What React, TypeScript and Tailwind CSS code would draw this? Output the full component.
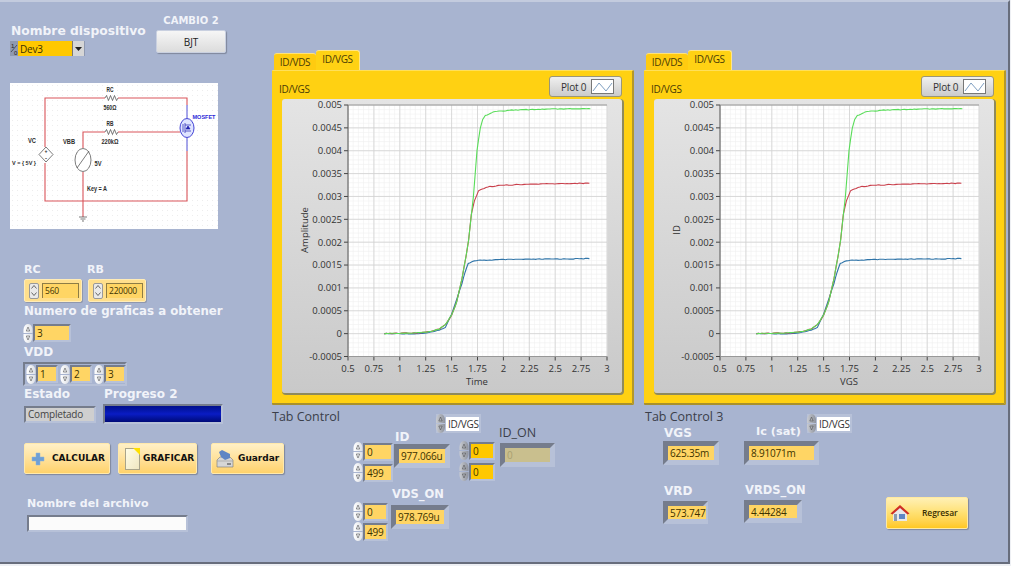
import React from "react";

const LABEL = "font-['DejaVu_Sans',sans-serif] font-bold text-[#f1f3f9] leading-none whitespace-nowrap";
const VALUE = "font-['Open_Sans',sans-serif] text-[10px] text-[#3d3200] leading-none tracking-[-0.2px] whitespace-nowrap";
const BTN_TEXT = "font-['DejaVu_Sans',sans-serif] font-bold text-[9px] text-[#111] leading-none whitespace-nowrap";

type P = number[];
const greenPts: P[] = [[.85,0],[1,.00001],[1.2,.00002],[1.3,.00005],[1.38,.0001],[1.44,.0002],[1.5,.0004],[1.55,.0007],[1.6,.0012],[1.64,.0017],[1.664,.00204],[1.71,.003],[1.745,.004],[1.777,.0045],[1.8,.00468],[1.825,.00477],[1.92,.00486],[2.1,.00489],[2.28,.0049],[2.6,.00492],[2.84,.00492]];
const redPts: P[] = [[.85,0],[1,.00001],[1.2,.00002],[1.3,.00005],[1.38,.0001],[1.44,.0002],[1.5,.0004],[1.55,.0007],[1.6,.0012],[1.64,.0017],[1.664,.00204],[1.69,.0026],[1.72,.0029],[1.76,.00313],[1.85,.00321],[1.95,.00324],[2.28,.00327],[2.83,.00329]];
const bluePts: P[] = [[.85,0],[1.2,0],[1.3,.00003],[1.38,.00007],[1.44,.00014],[1.5,.00042],[1.535,.00066],[1.6,.0011],[1.63,.00135],[1.66,.00153],[1.7,.00158],[1.757,.0016],[2,.00162],[2.83,.00164]];

const PX = 66, PY = 6, PW = 259, PH = 251.5;
const mx = (x: number) => PX + ((x - 0.5) / 2.5) * PW;
const my = (y: number) => PY + ((0.005 - y) / 0.0055) * PH;

function line(pts: P[], seed: number) {
  const out: string[] = [];
  let n = 0;
  for (let i = 0; i < pts.length - 1; i++) {
    const [x0, y0] = pts[i];
    const [x1, y1] = pts[i + 1];
    const steps = Math.max(1, Math.round(((x1 - x0) / 2.5) * PW / 2));
    for (let s = 0; s < steps; s++) {
      const t = s / steps;
      const jit = Math.sin((n + seed) * 12.9898) * 43758.5453;
      const j = (jit - Math.floor(jit) - 0.5) * 0.7;
      out.push(`${mx(x0 + (x1 - x0) * t).toFixed(1)},${(my(y0 + (y1 - y0) * t) + j).toFixed(1)}`);
      n++;
    }
  }
  const last = pts[pts.length - 1];
  out.push(`${mx(last[0]).toFixed(1)},${my(last[1]).toFixed(1)}`);
  return out.join(" ");
}

const xTicks = ["0.5","0.75","1","1.25","1.5","1.75","2","2.25","2.5","2.75","3"];
const yTicks = ["0.005","0.0045","0.004","0.0035","0.003","0.0025","0.002","0.0015","0.001","0.0005","0","-0.0005"];

function Chart({ xLabel, yLabel }: { xLabel: string; yLabel: string }) {
  const minorX: number[] = [];
  for (let i = 0; i <= 50; i++) minorX.push(PX + (i * PW) / 50);
  const minorY: number[] = [];
  for (let i = 0; i <= 55; i++) minorY.push(PY + (i * PH) / 55);
  return (
    <svg width="340" height="294" viewBox="0 0 340 294" style={{ fontFamily: "'Open Sans',sans-serif" }}>
      <rect x={PX} y={PY} width={PW} height={PH} fill="#fff" />
      {minorX.map((x, i) => <line key={i} x1={x} x2={x} y1={PY} y2={PY + PH} stroke="#f0f0f0" strokeWidth="0.6" />)}
      {minorY.map((y, i) => <line key={i} x1={PX} x2={PX + PW} y1={y} y2={y} stroke="#f0f0f0" strokeWidth="0.6" />)}
      {xTicks.map((t, i) => {
        const x = PX + (i * PW) / 10;
        return (
          <g key={t}>
            <line x1={x} x2={x} y1={PY} y2={PY + PH} stroke="#d2d2d2" strokeWidth="0.8" />
            <line x1={x} x2={x} y1={PY + PH} y2={PY + PH + 4} stroke="#444" strokeWidth="1" />
            <text x={x} y={273} textAnchor="middle" fontSize="9.5" fill="#333">{t}</text>
          </g>
        );
      })}
      {yTicks.map((t, i) => {
        const y = PY + (i * PH) / 11;
        return (
          <g key={t}>
            <line x1={PX} x2={PX + PW} y1={y} y2={y} stroke="#d2d2d2" strokeWidth="0.8" />
            <line x1={PX - 4} x2={PX} y1={y} y2={y} stroke="#444" strokeWidth="1" />
            <text x={PX - 6} y={y + 3.4} textAnchor="end" fontSize="9.5" fill="#333">{t}</text>
          </g>
        );
      })}
      <line x1={PX} x2={PX} y1={PY} y2={PY + PH} stroke="#555" strokeWidth="1" />
      <line x1={PX} x2={PX + PW} y1={PY} y2={PY} stroke="#888" strokeWidth="0.8" />
      <line x1={PX} x2={PX + PW} y1={PY + PH} y2={PY + PH} stroke="#888" strokeWidth="0.8" />
      <polyline points={line(bluePts, 1)} fill="none" stroke="#2f74a8" strokeWidth="1.1" />
      <polyline points={line(redPts, 200)} fill="none" stroke="#c9404c" strokeWidth="1.1" />
      <polyline points={line(greenPts, 500)} fill="none" stroke="#58dc58" strokeWidth="1.1" />
      <text x={195} y={286} textAnchor="middle" fontSize="9.5" fill="#333">{xLabel}</text>
      <text transform={`translate(26 131) rotate(-90)`} textAnchor="middle" fontSize="9.5" fill="#333">{yLabel}</text>
    </svg>
  );
}

function ChartPanel({ xLabel, yLabel }: { xLabel: string; yLabel: string }) {
  return (
    <div className="w-[362px] flex flex-col">
      <div className="flex items-end h-[19px] pl-[2px] mt-[49px] font-['Open_Sans',sans-serif] text-[10px] text-[#4a3c05] tracking-[-0.3px]">
        <div className="w-[42px] h-[17px] bg-[#ffcb10] rounded-t-[3px] flex items-center justify-center border-t border-[#ffe27a]">ID/VDS</div>
        <div className="w-[44px] h-[20px] bg-[#ffd214] rounded-t-[3px] flex items-center justify-center border-t border-r border-[#ffe58a] z-10 pb-[3px]">ID/VGS</div>
      </div>
      <div className="h-[335px] bg-[#ffd112] border-t border-[#ffe05a] border-r-2 border-b-2 border-r-[#b3982a] border-b-[#a8902c] rounded-[1px]">
        <div className="flex justify-between items-start h-[28px] pt-[5px] pr-[10px] pl-[7px]">
          <span className="mt-[8px] font-['Open_Sans',sans-serif] text-[10px] text-[#4a3c05] leading-none tracking-[-0.3px]">ID/VGS</span>
          <div className="flex items-center justify-between w-[73px] h-[21px] rounded-[3px] bg-gradient-to-b from-[#f0f0f0] to-[#cbcbcb] border border-[#9a9678] pl-[11px] pr-[7px]">
            <span className="font-['Open_Sans',sans-serif] text-[10px] text-[#333] leading-none tracking-[-0.2px]">Plot 0</span>
            <svg width="23" height="15" viewBox="0 0 23 15">
              <rect x="0.5" y="0.5" width="22" height="14" fill="#fff" stroke="#777" />
              <polyline points="2,12 8,4 15,12 21,4" fill="none" stroke="#7e9ec0" strokeWidth="1" />
            </svg>
          </div>
        </div>
        <div className="ml-[10px] w-[340px] h-[294px] rounded-[3px] bg-gradient-to-b from-[#e4e4e4] to-[#c9c9c9] shadow-[1px_1px_0_1px_#8f8a5c]">
          <Chart xLabel={xLabel} yLabel={yLabel} />
        </div>
      </div>
    </div>
  );
}

function Arrows({ h = 19, w = 10, dark = false }: { h?: number; w?: number; dark?: boolean }) {
  const id = dark ? "sd" : "sl";
  return (
    <svg width={w} height={h} viewBox="0 0 9 19" className="shrink-0">
      <defs>
        <linearGradient id={id} x1="0" x2="1">
          <stop offset="0" stopColor={dark ? "#c9ccd2" : "#ffffff"} />
          <stop offset="1" stopColor={dark ? "#8e929c" : "#dcdfe5"} />
        </linearGradient>
      </defs>
      <path d="M4.5 0C7.5 0 9 3 9 6.5V9H0V6.5C0 3 1.5 0 4.5 0Z" fill={`url(#${id})`} />
      <path d="M4.5 19C7.5 19 9 16 9 12.5V10H0V12.5C0 16 1.5 19 4.5 19Z" fill={`url(#${id})`} />
      <path d="M2.8 7L4.5 3L6.2 7Z" fill="none" stroke="#555" strokeWidth="0.6" />
      <path d="M2.8 12L4.5 16L6.2 12Z" fill="none" stroke="#555" strokeWidth="0.6" />
    </svg>
  );
}

function Frame({ w, h, b = 5, value, field = "bg-[#ffd564]", text = VALUE }: { w: number; h: number; b?: number; value: string; field?: string; text?: string }) {
  return (
    <div
      className="box-border flex border-solid border-t-[#757c8c] border-l-[#757c8c] border-r-[#b7c1d8] border-b-[#b7c1d8]"
      style={{ width: w, height: h, borderWidth: b }}
    >
      <div className={`flex-1 flex items-center pl-[2px] ${field} ${text}`}>{value}</div>
    </div>
  );
}

function SpinField({ value, w, field, dark }: { value: string; w: number; field?: string; dark?: boolean }) {
  return (
    <div className="flex items-center h-[19px]">
      <Arrows dark={dark} />
      <Frame w={w} h={18} b={2} value={value} field={field} />
    </div>
  );
}

function TabSelector() {
  return (
    <div className="flex items-center h-[19px] bg-[#b7c1d8] pr-[2px] w-max">
      <Arrows dark w={9} />
      <div className="ml-[1px] h-[14px] w-[33px] bg-white flex items-center pl-[2px] font-['Open_Sans',sans-serif] text-[10px] text-[#333] leading-none tracking-[-0.3px]">ID/VGS</div>
    </div>
  );
}

function BoxNum({ value }: { value: string }) {
  return (
    <div className="w-[58px] flex items-center h-[23px] rounded-[2px] bg-[#ffdf8c] border border-[#ffecb8] shadow-[1px_1px_0_#8f97ad] pl-[4px] gap-[3px]">
      <div className="w-[10px] h-[16px] rounded-[2px] bg-[#e9e9e9] border border-[#999] flex flex-col items-center justify-around">
        <svg width="6" height="4" viewBox="0 0 6 4"><path d="M0.5 3.5L3 0.5L5.5 3.5" fill="none" stroke="#444" strokeWidth="0.8" /></svg>
        <svg width="6" height="4" viewBox="0 0 6 4"><path d="M0.5 0.5L3 3.5L5.5 0.5" fill="none" stroke="#444" strokeWidth="0.8" /></svg>
      </div>
      <div className="w-[37px] h-[15px] border-t border-l border-r border-[#8d7c45] bg-[#ffd564] flex items-center pl-[2px] font-['Open_Sans',sans-serif] text-[8.5px] text-[#3d3200] leading-none tracking-[-0.2px] whitespace-nowrap">{value}</div>
    </div>
  );
}

function YellowButton({ children, w, gap = "gap-[8px]", pl = "pl-[8px]" }: { children: React.ReactNode; w: number; gap?: string; pl?: string }) {
  return (
    <div className={`shrink-0 flex items-center h-[31px] rounded-[2px] bg-gradient-to-b from-[#fff0c6] to-[#ffd26a] border border-[#ffe9ac] shadow-[1px_1px_1px_#7f879c] ${gap} ${pl}`} style={{ width: w }}>
      {children}
    </div>
  );
}

function CT({ x, y, w, c, size = 8, children }: { x: number; y: number; w: number; c?: string; size?: number; children: React.ReactNode }) {
  return (
    <text
      x={x}
      y={y}
      textAnchor="middle"
      textLength={w}
      lengthAdjust="spacingAndGlyphs"
      fontFamily="'Liberation Sans',sans-serif"
      fontWeight="700"
      fontSize={size}
      fill={c ?? "#2b2b2b"}
    >
      {children}
    </text>
  );
}

function Circuit() {
  return (
    <svg width="208" height="146" viewBox="0 0 208 146">
      <defs>
        <pattern id="dots" width="5" height="5" patternUnits="userSpaceOnUse">
          <rect x="2" y="2" width="0.8" height="0.8" fill="#e3e3e3" />
        </pattern>
      </defs>
      <rect width="208" height="146" fill="#fff" />
      <rect width="208" height="146" fill="url(#dots)" />
      <g fill="none" stroke="#d9545a" strokeWidth="1.1">
        <path d="M35 64V15H95M108 15H177V22" />
        <path d="M177 68V118H35V80" />
        <path d="M73 65V49H95M108 49H170" />
        <path d="M73 89V134" />
      </g>
      <path d="M177 22V35M177 55V68" fill="none" stroke="#3a3ad0" strokeWidth="0.9" />
      <g fill="none" stroke="#444" strokeWidth="0.7">
        <path d="M95 15L96.500 12.500L98.500 17.500L100.500 12.500L102.500 17.500L104.500 12.500L106.500 17.500L108 15" />
        <path d="M95 49L96.500 46.500L98.500 51.500L100.500 46.500L102.500 51.500L104.500 46.500L106.500 51.500L108 49" />
        <path d="M36 64L43 71.500L36 79L29 71.500Z" fill="#fff" />
        <ellipse cx="73" cy="77" rx="8" ry="11.500" fill="#fff" />
        <path d="M67 85L79 68" />
        <path d="M69 134H77M70.500 136H75.500M72 138H74" />
      </g>
      <CT x={36} y={70} w={3} size={6}>+</CT>
      <CT x={36} y={77} w={2} size={6}>-</CT>
      <ellipse cx="177" cy="45" rx="7" ry="9.500" fill="#dfe4ff" stroke="#3030d0" strokeWidth="0.9" />
      <path d="M173 41V49M175 40V50M175 42H181M175 48H181M178 43L180 46H176Z" fill="#2020b0" stroke="#2020b0" strokeWidth="0.7" />
      <CT x={100} y={8.5} w={7}>RC</CT>
      <CT x={100} y={26.5} w={13}>560Ω</CT>
      <CT x={100} y={42.5} w={7}>RB</CT>
      <CT x={100} y={60.5} w={17}>220kΩ</CT>
      <CT x={22} y={60} w={8}>VC</CT>
      <CT x={59} y={60.5} w={12}>VBB</CT>
      <CT x={14} y={82} w={24} size={6}>{"V = { 5V }"}</CT>
      <CT x={88} y={83} w={7}>5V</CT>
      <CT x={87} y={108} w={20}>Key = A</CT>
      <CT x={194} y={36} w={23} size={5.5} c="#2a2ad8">MOSFET</CT>
    </svg>
  );
}

function LeftColumn() {
  return (
    <div className="w-[272px] shrink-0 flex flex-col">
      <div className="h-[81px] flex pl-[10px]">
        <div className="w-[146px] flex flex-col">
          <span className={`${LABEL} text-[12.3px] ml-[1px] mt-[23px] h-[13px]`}>Nombre dispositivo</span>
          <div className="mt-[3px] w-[75px] h-[15px] bg-[#8f99b0] flex items-stretch">
            <svg width="8" height="15" viewBox="0 0 8 15" className="shrink-0">
              <text x="1" y="7" fontSize="6" fontFamily="'Liberation Sans',sans-serif" fill="#222">1</text>
              <path d="M1 11L7 4" stroke="#222" strokeWidth="0.6" />
              <text x="4" y="13.500" fontSize="6" fontFamily="'Liberation Sans',sans-serif" fill="#222">0</text>
            </svg>
            <div className={`w-[54px] bg-[#ffc800] flex items-center pl-[2px] ${VALUE}`}>Dev3</div>
            <div className="w-[12px] bg-[#d6d6d6] border-l border-[#777] flex items-center justify-center">
              <svg width="7" height="4" viewBox="0 0 7 4"><path d="M0 0H7L3.500 4Z" fill="#222" /></svg>
            </div>
          </div>
        </div>
        <div className="flex flex-col">
          <span className={`${LABEL} text-[10px] text-center mt-[14px] h-[11px]`}>CAMBIO 2</span>
          <div className="mt-[3px] w-[70px] h-[23px] rounded-[2px] bg-gradient-to-b from-[#f6f6f6] to-[#dcdcdc] shadow-[1px_1px_1px_#7f879c] border border-[#c9d0e0] flex items-center justify-center font-['Open_Sans',sans-serif] text-[10px] text-[#222] leading-none">BJT</div>
        </div>
      </div>
      <div className="ml-[10px] w-[208px] h-[146px]"><Circuit /></div>

      <div className="ml-[24px] mt-[34px] flex gap-[6px]">
        <div className="flex flex-col w-[58px]">
          <span className={`${LABEL} text-[11px] h-[12px] mb-[4px] pt-[1px]`}>RC</span>
          <BoxNum value="560" />
        </div>
        <div className="flex flex-col w-[58px]">
          <span className={`${LABEL} text-[11px] h-[12px] mb-[4px] pt-[1px] -ml-[1px]`}>RB</span>
          <BoxNum value="220000" />
        </div>
      </div>

      <span className={`${LABEL} text-[11.8px] ml-[24px] mt-[4px] h-[13px]`}>Numero de graficas a obtener</span>
      <div className="ml-[23px] mt-[5px] h-[18px] flex items-center">
        <Arrows />
        <Frame w={38} h={18} b={2} value="3" />
      </div>

      <span className={`${LABEL} text-[12px] ml-[24px] mt-[4px] h-[13px]`}>VDD</span>
      <div className="ml-[23px] mt-[3px] w-[104px] h-[24px] box-border border-2 border-t-[#757c8c] border-l-[#757c8c] border-r-[#b7c1d8] border-b-[#b7c1d8] flex items-center gap-[2px] pl-[1px]">
        <SpinField value="1" w={22} />
        <SpinField value="2" w={22} />
        <SpinField value="3" w={22} />
      </div>

      <div className="ml-[24px] mt-[2px] flex h-[13px]">
        <span className={`${LABEL} text-[12px] w-[80px]`}>Estado</span>
        <span className={`${LABEL} text-[12px]`}>Progreso 2</span>
      </div>
      <div className="ml-[24px] mt-[3px] flex items-center">
        <div className="w-[72px] h-[17px] box-border border-2 border-t-[#757c8c] border-l-[#757c8c] border-r-[#b7c1d8] border-b-[#b7c1d8] bg-[#cfcfcf] flex items-center pl-[2px] font-['Open_Sans',sans-serif] text-[10px] text-[#444] leading-none tracking-[-0.2px]">Completado</div>
        <div className="ml-[7px] w-[120px] h-[20px] box-border border-2 border-t-[#757c8c] border-l-[#757c8c] border-r-[#b7c1d8] border-b-[#b7c1d8] bg-gradient-to-b from-[#000f8c] via-[#0a1cc4] to-[#000a78]" />
      </div>

      <div className="ml-[24px] mt-[19px] flex w-max">
        <YellowButton w={86} gap="gap-[7px]" pl="pl-[6px]">
          <svg width="14" height="14" viewBox="0 0 14 14" className="shrink-0">
            <path d="M5 1H9V5H13V9H9V13H5V9H1V5H5Z" fill="#6f9fd4" stroke="#8fb6dd" strokeWidth="0.5" />
          </svg>
          <span className={BTN_TEXT}>CALCULAR</span>
        </YellowButton>
        <div className="ml-[8px] shrink-0">
          <YellowButton w={79} gap="gap-[3px]" pl="pl-[6px]">
            <svg width="15" height="22" viewBox="0 0 15 22" className="shrink-0">
              <defs>
                <linearGradient id="pg" x1="0" y1="0" x2="1" y2="1">
                  <stop offset="0" stopColor="#fffde8" />
                  <stop offset="1" stopColor="#efe6c0" />
                </linearGradient>
              </defs>
              <rect x="0.5" y="0.5" width="14" height="21" fill="url(#pg)" stroke="#a9a48a" />
              <path d="M8 0H15V7Z" fill="#ffe000" />
            </svg>
            <span className={BTN_TEXT}>GRAFICAR</span>
          </YellowButton>
        </div>
        <div className="ml-[14px] shrink-0">
          <YellowButton w={73} gap="gap-[4px]" pl="pl-[4px]">
            <svg width="18" height="19" viewBox="0 0 18 19" className="shrink-0">
              <path d="M1 11L4 8H14L17 11V18H1Z" fill="#d6d6d6" stroke="#777" strokeWidth="0.6" />
              <path d="M1 12H17" stroke="#999" strokeWidth="0.6" />
              <path d="M3 3L6 1L14 5V9L9 11L5 8Z" fill="#5f86c4" />
              <rect x="11" y="14" width="4" height="2" fill="#888" />
            </svg>
            <span className={`${BTN_TEXT} text-[8.8px]`}>Guardar</span>
          </YellowButton>
        </div>
      </div>

      <span className={`${LABEL} text-[11px] ml-[27px] mt-[23px] h-[13px] pt-[1px]`}>Nombre del archivo</span>
      <div className="ml-[27px] mt-[5px] w-[161px] h-[17px] box-border border-2 border-t-[#757c8c] border-l-[#757c8c] border-r-[#b7c1d8] border-b-[#b7c1d8] bg-[#fbfbfb]" />
    </div>
  );
}

function CenterBottom() {
  const label = "font-['Open_Sans',sans-serif] text-[12.5px] text-[#3b3f4a] leading-none whitespace-nowrap";
  return (
    <div className="flex flex-col">
      <div className="flex h-[24px]">
        <span className={`${label} w-[164px] pt-[6px]`}>Tab Control</span>
        <div className="mt-[9px]"><TabSelector /></div>
      </div>
      <div className="flex pl-[81px]">
        <div className="w-[106px] flex flex-col">
          <div className="flex">
            <div className="w-[41px] mt-[13px] flex flex-col gap-[2px]">
              <SpinField value="0" w={30} />
              <SpinField value="499" w={30} />
            </div>
            <div className="flex flex-col">
              <span className={`${LABEL} text-[12px] h-[14px] ml-[1px] pt-[2px]`}>ID</span>
              <div className="mt-[1px]"><Frame w={56} h={24} b={5} value="977.066u" /></div>
            </div>
          </div>
          <div className="flex mt-[6px]">
            <div className="w-[38px] mt-[14px] flex flex-col gap-[1px]">
              <SpinField value="0" w={25} />
              <SpinField value="499" w={25} />
            </div>
            <div className="flex flex-col">
              <span className={`${LABEL} text-[11.5px] h-[14px] ml-[1px] pt-[1px]`}>VDS_ON</span>
              <div className="mt-[3px]"><Frame w={58} h={24} b={5} value="978.769u" /></div>
            </div>
          </div>
        </div>
        <div className="w-[40px] mt-[12px] flex flex-col gap-[2px]">
          <SpinField value="0" w={26} dark field="bg-[#ffc800]" />
          <SpinField value="0" w={26} dark field="bg-[#ffc800]" />
        </div>
        <div className="flex flex-col -mt-[3px]">
          <span className={`${label} h-[14px] pt-[1px]`}>ID_ON</span>
          <div className="ml-[1px] mt-[3px]">
            <Frame w={55} h={24} b={5} value="0" field="bg-[#c9bf8e]" text="font-['Open_Sans',sans-serif] text-[10px] text-[#a99f70] leading-none" />
          </div>
        </div>
      </div>
    </div>
  );
}

function RightBottom() {
  return (
    <div className="flex flex-col">
      <div className="flex h-[21px]">
        <span className="font-['Open_Sans',sans-serif] text-[12.5px] text-[#3b3f4a] leading-none whitespace-nowrap w-[163px] pl-[1px] pt-[6px]">Tab Control 3</span>
        <div className="mt-[9px]"><TabSelector /></div>
      </div>
      <div className="flex pl-[19px]">
        <div className="w-[81px] flex flex-col">
          <span className={`${LABEL} text-[12px] h-[12px] ml-[1px] pt-[1px]`}>VGS</span>
          <div className="mt-[3px]"><Frame w={56} h={24} b={5} value="625.35m" /></div>
          <span className={`${LABEL} text-[12px] h-[12px] ml-[1px] mt-[20px]`}>VRD</span>
          <div className="mt-[4px]"><Frame w={45} h={23} b={5} value="573.747" /></div>
        </div>
        <div className="w-[142px] flex flex-col">
          <span className={`${LABEL} text-[11.3px] h-[12px] ml-[12px]`}>Ic (sat)</span>
          <div className="mt-[3px]"><Frame w={75} h={24} b={5} value="8.91071m" /></div>
          <span className={`${LABEL} text-[11.5px] h-[12px] ml-[1px] mt-[20px]`}>VRDS_ON</span>
          <div className="mt-[3px]"><Frame w={58} h={23} b={5} value="4.44284" /></div>
        </div>
        <div className="mt-[71px] w-[82px] h-[32px] rounded-[2px] bg-gradient-to-b from-[#fff0b4] via-[#ffe070] to-[#ffc81e] border border-[#ffe9a0] shadow-[1px_1px_1px_#7f879c] flex items-center pl-[3px] gap-[12px]">
          <svg width="20" height="18" viewBox="0 0 20 18" className="shrink-0">
            <path d="M3 9V17H17V9L10 3Z" fill="#e9e9e9" />
            <rect x="9" y="10" width="6" height="5" fill="#5f86c4" />
            <rect x="4" y="10" width="3" height="7" fill="#8b9bb0" />
            <path d="M0.500 9.500L10 1L19.500 9.500L17.500 10.500L10 4L2.500 10.500Z" fill="#cf2f25" />
          </svg>
          <span className="font-['Open_Sans',sans-serif] font-semibold text-[8.5px] text-[#3a2f00] leading-none tracking-[-0.1px]">Regresar</span>
        </div>
      </div>
    </div>
  );
}

export default function App() {
  return (
    <div className="w-[1011px] h-[566px] bg-[#eef0f4] overflow-hidden">
      <div className="box-border w-[1010px] h-[564px] bg-[#a8b4d0] border-t-2 border-t-[#c3cbde] border-r-2 border-r-[#676d7c] border-b-2 border-b-[#676d7c] flex">
        <LeftColumn />
        <div className="w-[362px] flex flex-col shrink-0">
          <ChartPanel xLabel="Time" yLabel="Amplitude" />
          <CenterBottom />
        </div>
        <div className="w-[362px] ml-[10px] flex flex-col shrink-0">
          <ChartPanel xLabel="VGS" yLabel="ID" />
          <RightBottom />
        </div>
      </div>
    </div>
  );
}
